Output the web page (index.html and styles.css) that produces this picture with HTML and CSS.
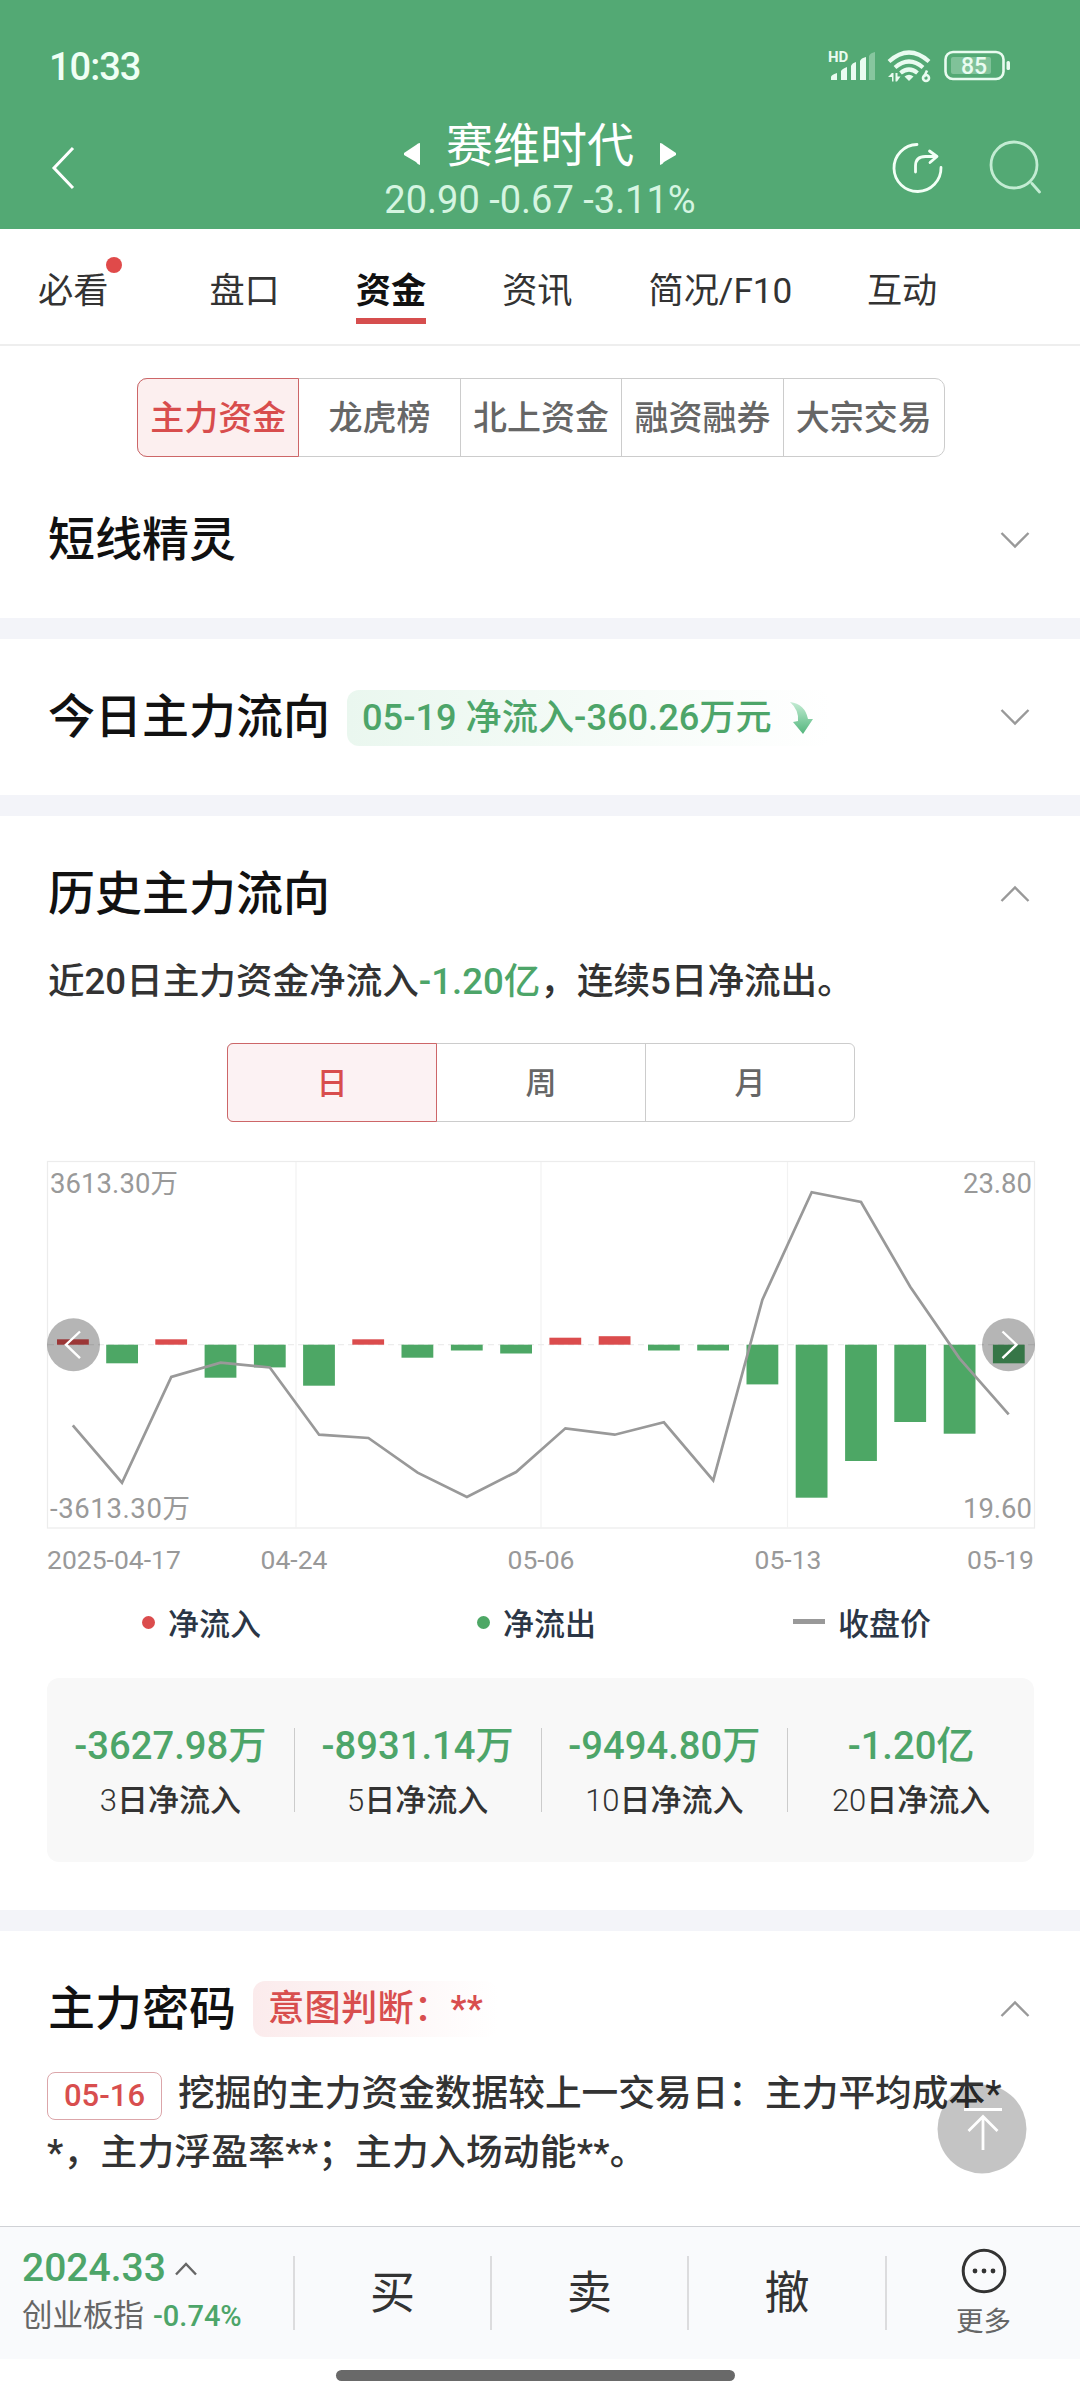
FILE: index.html
```html
<!DOCTYPE html>
<html lang="zh-CN">
<head>
<meta charset="utf-8">
<title>赛维时代 - 资金</title>
<link rel="stylesheet" href="styles.css">
</head>
<body>
<header class="header">
  <div class="status">
    <span class="clock">10:33</span>
    <svg class="status-icons" width="190" height="40" viewBox="825 46 190 40">
      <text x="828" y="62" class="hd">HD</text>
      <g fill="#e9fbf0">
        <path d="M831 80v-3q0-2 6-4v7zM841 80v-9q1-2 6-4v13zM851 80V66q1-3 5-4v18zM860 80V61q1-3 6-4v23z"/>
        <path d="M869 80V56q1-3 6-4v28z" opacity=".35"/>
        <path d="M909 81l-4.500-4.500q4.500-3.600 9 0z"/>
        <path d="M888 77l3.500-3.500V73h2v8.500H892V77zM895.500 73h2v3.500h3l-3.500 5h-1.500z"/>
      </g>
      <g fill="none" stroke="#e9fbf0" stroke-width="4.200">
        <path d="M889 61.500q20-18 40 0M895 67.500q14-12 28 0M900.500 73q8.500-7 17 0"/>
        <circle cx="926" cy="78" r="3" stroke-width="2.600"/>
        <path d="M924 77l3-6.500" stroke-width="2.600"/>
        <rect x="945.500" y="52" width="58" height="27" rx="7.500" stroke-width="2.600"/>
      </g>
      <rect x="951" y="57" width="40" height="17" rx="2" fill="#e9fbf0" opacity=".3"/>
      <rect x="1006.500" y="61" width="3.500" height="9" rx="1.500" fill="#e9fbf0"/>
      <text x="974" y="73.500" class="level">85</text>
    </svg>
  </div>
  <div class="nav">
    <svg class="back" width="30" height="48" viewBox="0 0 30 48"><path d="M25 4L6 24l19 20" fill="none" stroke="#fff" stroke-width="3"/></svg>
    <div class="stock">
      <div class="name">
        <svg width="16" height="24" viewBox="0 0 16 24"><path d="M16 1v22q-2 0-4-3L0 13v-2L12 3q2-2 4-2z" fill="#fff"/></svg>
        <h1>赛维时代</h1>
        <svg width="16" height="24" viewBox="0 0 16 24"><path d="M0 1v22q2 0 4-3l12-7v-2L4 3Q2 1 0 1z" fill="#fff"/></svg>
      </div>
      <div class="quote">20.90 -0.67 -3.11%</div>
    </div>
    <svg class="tools" width="160" height="60" viewBox="885 138 160 60" fill="none" stroke-linecap="round" stroke-linejoin="round" stroke-width="2.800">
      <path d="M917 144.500a23.500 23.500 0 1 0 24 23M915.500 172v-6q0-9.500 10-9.500h10M929.500 151l7.500 5.500-7 6" stroke="#f2fff6"/>
      <path d="M1037 165a23 23 0 1 0-46 0a23 23 0 1 0 46 0zM1032 183.500l7.500 8.500" stroke="#c3ecd3"/>
    </svg>
  </div>
</header>

<nav class="tabs">
  <a class="tab dotted">必看<i class="badge"></i></a>
  <a class="tab">盘口</a>
  <a class="tab active">资金</a>
  <a class="tab">资讯</a>
  <a class="tab">简况/F10</a>
  <a class="tab">互动</a>
</nav>

<main>
  <section class="sec first">
    <div class="seg wide">
      <span class="on">主力资金</span><span>龙虎榜</span><span>北上资金</span><span>融资融券</span><span>大宗交易</span>
    </div>
    <div class="head">
      <h2>短线精灵</h2>
      <svg class="chev" width="30" height="18" viewBox="0 0 30 18"><path d="M1.500 2L15 15.500 28.500 2"/></svg>
    </div>
  </section>

  <section class="sec second">
    <div class="head">
      <h2>今日主力流向</h2>
      <div class="tag green">
        <span>05-19 净流入-360.26万元</span>
        <svg width="26" height="32" viewBox="0 0 26 32">
          <defs><linearGradient id="fall" x1="0" y1="0" x2="0" y2="1"><stop offset="0" stop-color="#c5ecd4"/><stop offset=".6" stop-color="#7fcc9f"/><stop offset="1" stop-color="#55b57d"/></linearGradient></defs>
          <path d="M0 0q15 2 18 17h5L13 32 3 20l5-1Q9 8 0 0z" fill="url(#fall)"/>
        </svg>
      </div>
      <svg class="chev" width="30" height="18" viewBox="0 0 30 18"><path d="M1.500 2L15 15.500 28.500 2"/></svg>
    </div>
  </section>

  <section class="sec third">
    <div class="head">
      <h2>历史主力流向</h2>
      <svg class="chev" width="30" height="18" viewBox="0 0 30 18"><path d="M1.500 16L15 2.500 28.500 16"/></svg>
    </div>
    <p class="summary">近20日主力资金净流入<b>-1.20亿</b>，连续5日净流出。</p>
    <div class="seg period"><span class="on">日</span><span>周</span><span>月</span></div>

    <svg class="chart" width="990" height="370" viewBox="46 1160 990 370">
      <g fill="none" stroke="#ececec" stroke-width="1.200">
        <rect x="47.500" y="1161.500" width="987" height="366.500"/>
        <path d="M296 1162v366M541 1162v366M787.500 1162v366" stroke="#f2f2f2"/>
        <path d="M48 1344.700h986" stroke-dasharray="6 4"/>
      </g>
      <g fill="#db4c4d">
        <rect x="57" y="1339.300" width="31.800" height="5.400"/>
        <rect x="155.300" y="1339.300" width="31.800" height="5.400"/>
        <rect x="352.300" y="1339.300" width="31.800" height="5.400"/>
        <rect x="549.400" y="1337.700" width="31.800" height="7"/>
        <rect x="598.700" y="1336.200" width="31.800" height="8.500"/>
      </g>
      <g fill="#4da765">
        <rect x="106.200" y="1344.700" width="31.800" height="18.600"/>
        <rect x="204.600" y="1344.700" width="31.800" height="33"/>
        <rect x="253.900" y="1344.700" width="31.800" height="22.700"/>
        <rect x="303.100" y="1344.700" width="31.800" height="41"/>
        <rect x="401.500" y="1344.700" width="31.800" height="13"/>
        <rect x="450.900" y="1344.700" width="31.800" height="5.800"/>
        <rect x="500.200" y="1344.700" width="31.800" height="8.800"/>
        <rect x="648" y="1344.700" width="31.800" height="5.800"/>
        <rect x="697.200" y="1344.700" width="31.800" height="5.800"/>
        <rect x="746.500" y="1344.700" width="31.800" height="39.700"/>
        <rect x="795.700" y="1344.700" width="31.800" height="153"/>
        <rect x="845.100" y="1344.700" width="31.800" height="116.300"/>
        <rect x="894.300" y="1344.700" width="31.800" height="77.300"/>
        <rect x="943.700" y="1344.700" width="31.800" height="89"/>
        <rect x="992.900" y="1344.700" width="31.800" height="18.600"/>
      </g>
      <polyline fill="none" stroke="#999" stroke-width="2.700" points="72.800,1425.300 122,1482.700 171.300,1377 220.600,1362.700 269.800,1367.500 319.100,1434.700 368.400,1438 417.600,1472.700 466.900,1497 516.100,1472 565.400,1428.300 614.700,1434.700 663.900,1422.300 713.200,1480.300 762.400,1299.700 811.700,1192.300 861,1202 910.200,1286.700 959.500,1358.300 1008.700,1414.300"/>
      <g class="axis">
        <text x="50" y="1192.500" textLength="128">3613.30万</text>
        <text x="50" y="1517.500" textLength="140">-3613.30万</text>
        <text x="1032" y="1192.500" text-anchor="end">23.80</text>
        <text x="1032" y="1517.500" text-anchor="end">19.60</text>
      </g>
      <g fill="#000" opacity=".29"><circle cx="73.500" cy="1344.700" r="26.500"/><circle cx="1008.500" cy="1344.700" r="26.500"/></g>
      <path d="M80 1331.500l-14 13.200 14 13.500M1002.500 1331.500l14 13.200-14 13.500" fill="none" stroke="#fff" stroke-width="2.400"/>
    </svg>
    <div class="dates"><span>2025-04-17</span><span>04-24</span><span>05-06</span><span>05-13</span><span>05-19</span></div>
    <div class="legend">
      <span><i class="dot red"></i>净流入</span>
      <span><i class="dot"></i>净流出</span>
      <span><i class="dash"></i>收盘价</span>
    </div>
    <div class="stats">
      <div><strong>-3627.98万</strong><small><i>3</i>日净流入</small></div>
      <div><strong>-8931.14万</strong><small><i>5</i>日净流入</small></div>
      <div><strong>-9494.80万</strong><small><i>10</i>日净流入</small></div>
      <div><strong>-1.20亿</strong><small><i>20</i>日净流入</small></div>
    </div>
  </section>

  <section class="sec fourth">
    <div class="head">
      <h2>主力密码</h2>
      <div class="tag pink"><span>意图判断：**</span></div>
      <svg class="chev" width="30" height="18" viewBox="0 0 30 18"><path d="M1.500 16L15 2.500 28.500 16"/></svg>
    </div>
    <p class="note"><span class="day">05-16</span>挖掘的主力资金数据较上一交易日：主力平均成本*<br><span class="rest">*，主力浮盈率**；主力入场动能**。</span></p>
    <svg class="totop" width="90" height="90" viewBox="0 0 90 90"><circle cx="45" cy="45" r="44.500" fill="#000" opacity=".23"/><path d="M27 25.500h38M46 66V32M31.500 47L46 32.500 60.500 47" fill="none" stroke="#fff" stroke-width="2.800"/></svg>
  </section>
</main>

<footer class="footer">
  <div class="bar">
    <div class="index">
      <div class="idx">2024.33<svg width="24" height="15" viewBox="0 0 24 15"><path d="M2 13.500L12 3l10 10.500" fill="none" stroke="#666" stroke-width="2.400"/></svg></div>
      <div class="sub">创业板指<em>-0.74%</em></div>
    </div>
    <span class="act">买</span>
    <span class="act">卖</span>
    <span class="act">撤</span>
    <div class="more">
      <svg width="46" height="46" viewBox="0 0 46 46"><circle cx="23" cy="23" r="20.800" fill="none" stroke="#333" stroke-width="3"/><g fill="#333"><circle cx="14" cy="23" r="2.400"/><circle cx="23" cy="23" r="2.400"/><circle cx="32" cy="23" r="2.400"/></g></svg>
      <span>更多</span>
    </div>
  </div>
  <div class="home"></div>
</footer>
</body>
</html>
```
FILE: styles.css
```css
* { box-sizing: border-box; }
body {
  margin: 0;
  width: 1080px;
  height: 2400px;
  overflow: hidden;
  background: #fff;
  color: #333;
  font-family: Roboto, "Noto Sans CJK SC", sans-serif;
  font-weight: 500;
  display: flex;
  flex-direction: column;
}
h1, h2, p { margin: 0; font-weight: 500; }
svg { display: block; flex: none; }
i, em { font-style: normal; }

.header { height: 229px; background: #53a974; color: #fff; }
.status { height: 114px; padding: 46px 65px 28px 49px; display: flex; justify-content: space-between; }
.clock { font-size: 38px; line-height: 42px; letter-spacing: -1px; color: #effff5; }
.hd { font: 700 15px Roboto, sans-serif; fill: #e9fbf0; }
.level { font: 500 23px Roboto, sans-serif; fill: #e9fbf0; text-anchor: middle; }
.nav { height: 115px; display: grid; grid-template-columns: 195px 1fr 195px; }
.back { margin: 30px 0 0 48px; }
.stock { display: flex; flex-direction: column; align-items: center; padding-top: 2px; }
.name { height: 60px; display: flex; align-items: center; gap: 26px; }
.name svg { margin-top: 15px; }
.name h1 { font-size: 47px; line-height: 60px; font-weight: 400; }
.quote { font-size: 38px; line-height: 48px; font-weight: 400; color: #d5f5e1; }
.tools { margin: 24px 0 0; }

.tabs { height: 117px; padding: 0 38px; border-bottom: 2px solid #eee; display: flex; align-items: flex-start; gap: 76px; }
.tab { position: relative; font-size: 35.200px; line-height: 44px; height: 95px; padding-top: 40px; white-space: nowrap; font-weight: 400; }
.tab.dotted { margin-right: 25px; }
.tab.active { font-weight: 700; color: #111; border-bottom: 6px solid #d64e4e; }
.tab:last-child { margin-left: -1.500px; }
.badge { position: absolute; left: 68px; top: 28px; width: 16px; height: 16px; border-radius: 50%; background: #e04a4a; }

.sec { position: relative; padding: 0 46px 0 47px; border-bottom: 21px solid #f3f4f9; }
.first { height: 293px; padding-top: 32px; }
.second { height: 177px; padding-top: 48px; }
.third { height: 1115px; padding-top: 48px; }
.fourth { height: 295px; padding-top: 48px; border-bottom: 0; }

.seg { display: flex; margin: 0 auto; height: 79px; border: 1px solid #ccc; border-radius: 10px; color: #666; }
.seg span { flex: 1; display: flex; align-items: center; justify-content: center; border-left: 1px solid #ccc; white-space: nowrap; padding-bottom: 5px; }
.seg .on { margin: -1px 0 -1px -1px; border: 1px solid #cd6668; border-radius: 10px 0 0 10px; background: #fcefef; color: #d84d4d; }
.seg span:nth-child(2) { border-left: 0; }
.wide { width: 808px; margin-left: 90px; font-size: 34px; }
.period { width: 628px; font-size: 31px; border-radius: 6px; }
.period .on { border-radius: 6px 0 0 6px; background: #fcf2f3; }

.head { height: 60px; display: flex; align-items: center; }
.first .head { margin-top: 53px; }
.head h2 { font-size: 47px; line-height: 60px; color: #111; font-weight: 500; padding-left: 1px; }
.chev { margin: 0 4px 0 auto; fill: none; stroke: #999; stroke-width: 2.400; }
.tag { height: 56px; padding: 0 15px; border-radius: 12px; font-size: 36.200px; line-height: 56px; display: flex; align-items: center; white-space: nowrap; }
.green { margin: 2px 0 0 17px; gap: 18px; color: #4da569; background: linear-gradient(90deg, #eaf7ef, #fff); }
.pink { margin-left: 17px; color: #d84e4e; background: linear-gradient(90deg, #fbebec, #fff); }
.pink span { letter-spacing: .3px; }

.summary { margin-top: 28px; font-size: 36.600px; line-height: 60px; white-space: nowrap; padding-left: 1px; }
.summary b { font-weight: 500; color: #4da569; }
.period { margin: 31px 0 0 180px; }
.chart { margin: 38px 0 0 -1px; }
.axis text { font: 400 27.500px Roboto, "Noto Sans CJK SC", sans-serif; fill: #999; }
.dates { height: 58px; display: grid; grid-template-columns: 182px 130px 364px 130px 181px; align-items: center; font-size: 26.500px; font-weight: 400; color: #999; text-align: center; }
.dates span:first-child { text-align: left; }
.dates span:last-child { text-align: right; }
.legend { height: 66px; margin-bottom: 24px; padding-left: 95px; display: flex; align-items: center; font-size: 31px; color: #2b3646; white-space: nowrap; }
.legend span { flex: none; display: flex; align-items: center; margin-right: 216px; }
.legend span:nth-child(2) { margin-right: 197px; }
.legend span:nth-child(3) { margin-right: 0; }
.dot { width: 13px; height: 13px; border-radius: 50%; background: #4da765; margin: 2px 13px 0 0; }
.dot.red { background: #db4c4d; }
.dash { width: 32px; height: 5px; background: #999; margin-right: 13px; }
.stats { height: 184px; border-radius: 12px; background: #f8f8f8; padding: 50px 0; display: grid; grid-template-columns: repeat(4, 1fr); }
.stats div { height: 84px; border-left: 1px solid #ccc; display: flex; flex-direction: column; align-items: center; white-space: nowrap; }
.stats div:first-child { border-left: 0; }
.stats strong { font-size: 38.200px; line-height: 36px; font-weight: 500; color: #4da569; }
.stats small { margin-top: 19px; font-size: 31px; line-height: 36px; font-weight: 500; }
.stats i { font-weight: 300; }

.note { margin-top: 25px; font-size: 36.700px; line-height: 59px; white-space: nowrap; }
.day { display: inline-block; width: 115px; height: 48px; margin: -10px 16px -10px 0; border: 1px solid #dba6aa; border-radius: 8px; font-size: 31px; line-height: 46px; text-align: center; color: #d84e4e; vertical-align: 0; }
.rest { letter-spacing: .25px; }
.totop { position: absolute; left: 937px; top: 153px; }

.footer { height: 174px; }
.bar { height: 133px; border-top: 1px solid #d0d2d6; background: #f9fafc; display: grid; grid-template-columns: 293px 197px 197px 198px 195px; align-items: start; }
.index { padding: 17px 0 0 22px; white-space: nowrap; }
.idx { font-size: 39px; line-height: 48px; color: #4da569; display: flex; align-items: center; gap: 8px; }
.sub { font-size: 30.500px; line-height: 46px; margin-top: 1px; font-weight: 400; color: #666; }
.sub em { margin-left: 9px; font-size: 29px; font-weight: 500; color: #4da569; }
.act, .more { margin-top: 29px; height: 74px; border-left: 2px solid #dcdcde; }
.act { font-size: 45px; line-height: 76px; text-align: center; font-weight: 400; }
.more { display: flex; flex-direction: column; align-items: center; font-size: 27.500px; line-height: 40px; color: #666; font-weight: 400; }
.more svg { margin-top: -8px; flex: none; }
.more span { margin-top: 8px; }
.home { width: 399px; height: 11px; margin: 11px 0 0 336px; border-radius: 6px; background: #696969; }
```
